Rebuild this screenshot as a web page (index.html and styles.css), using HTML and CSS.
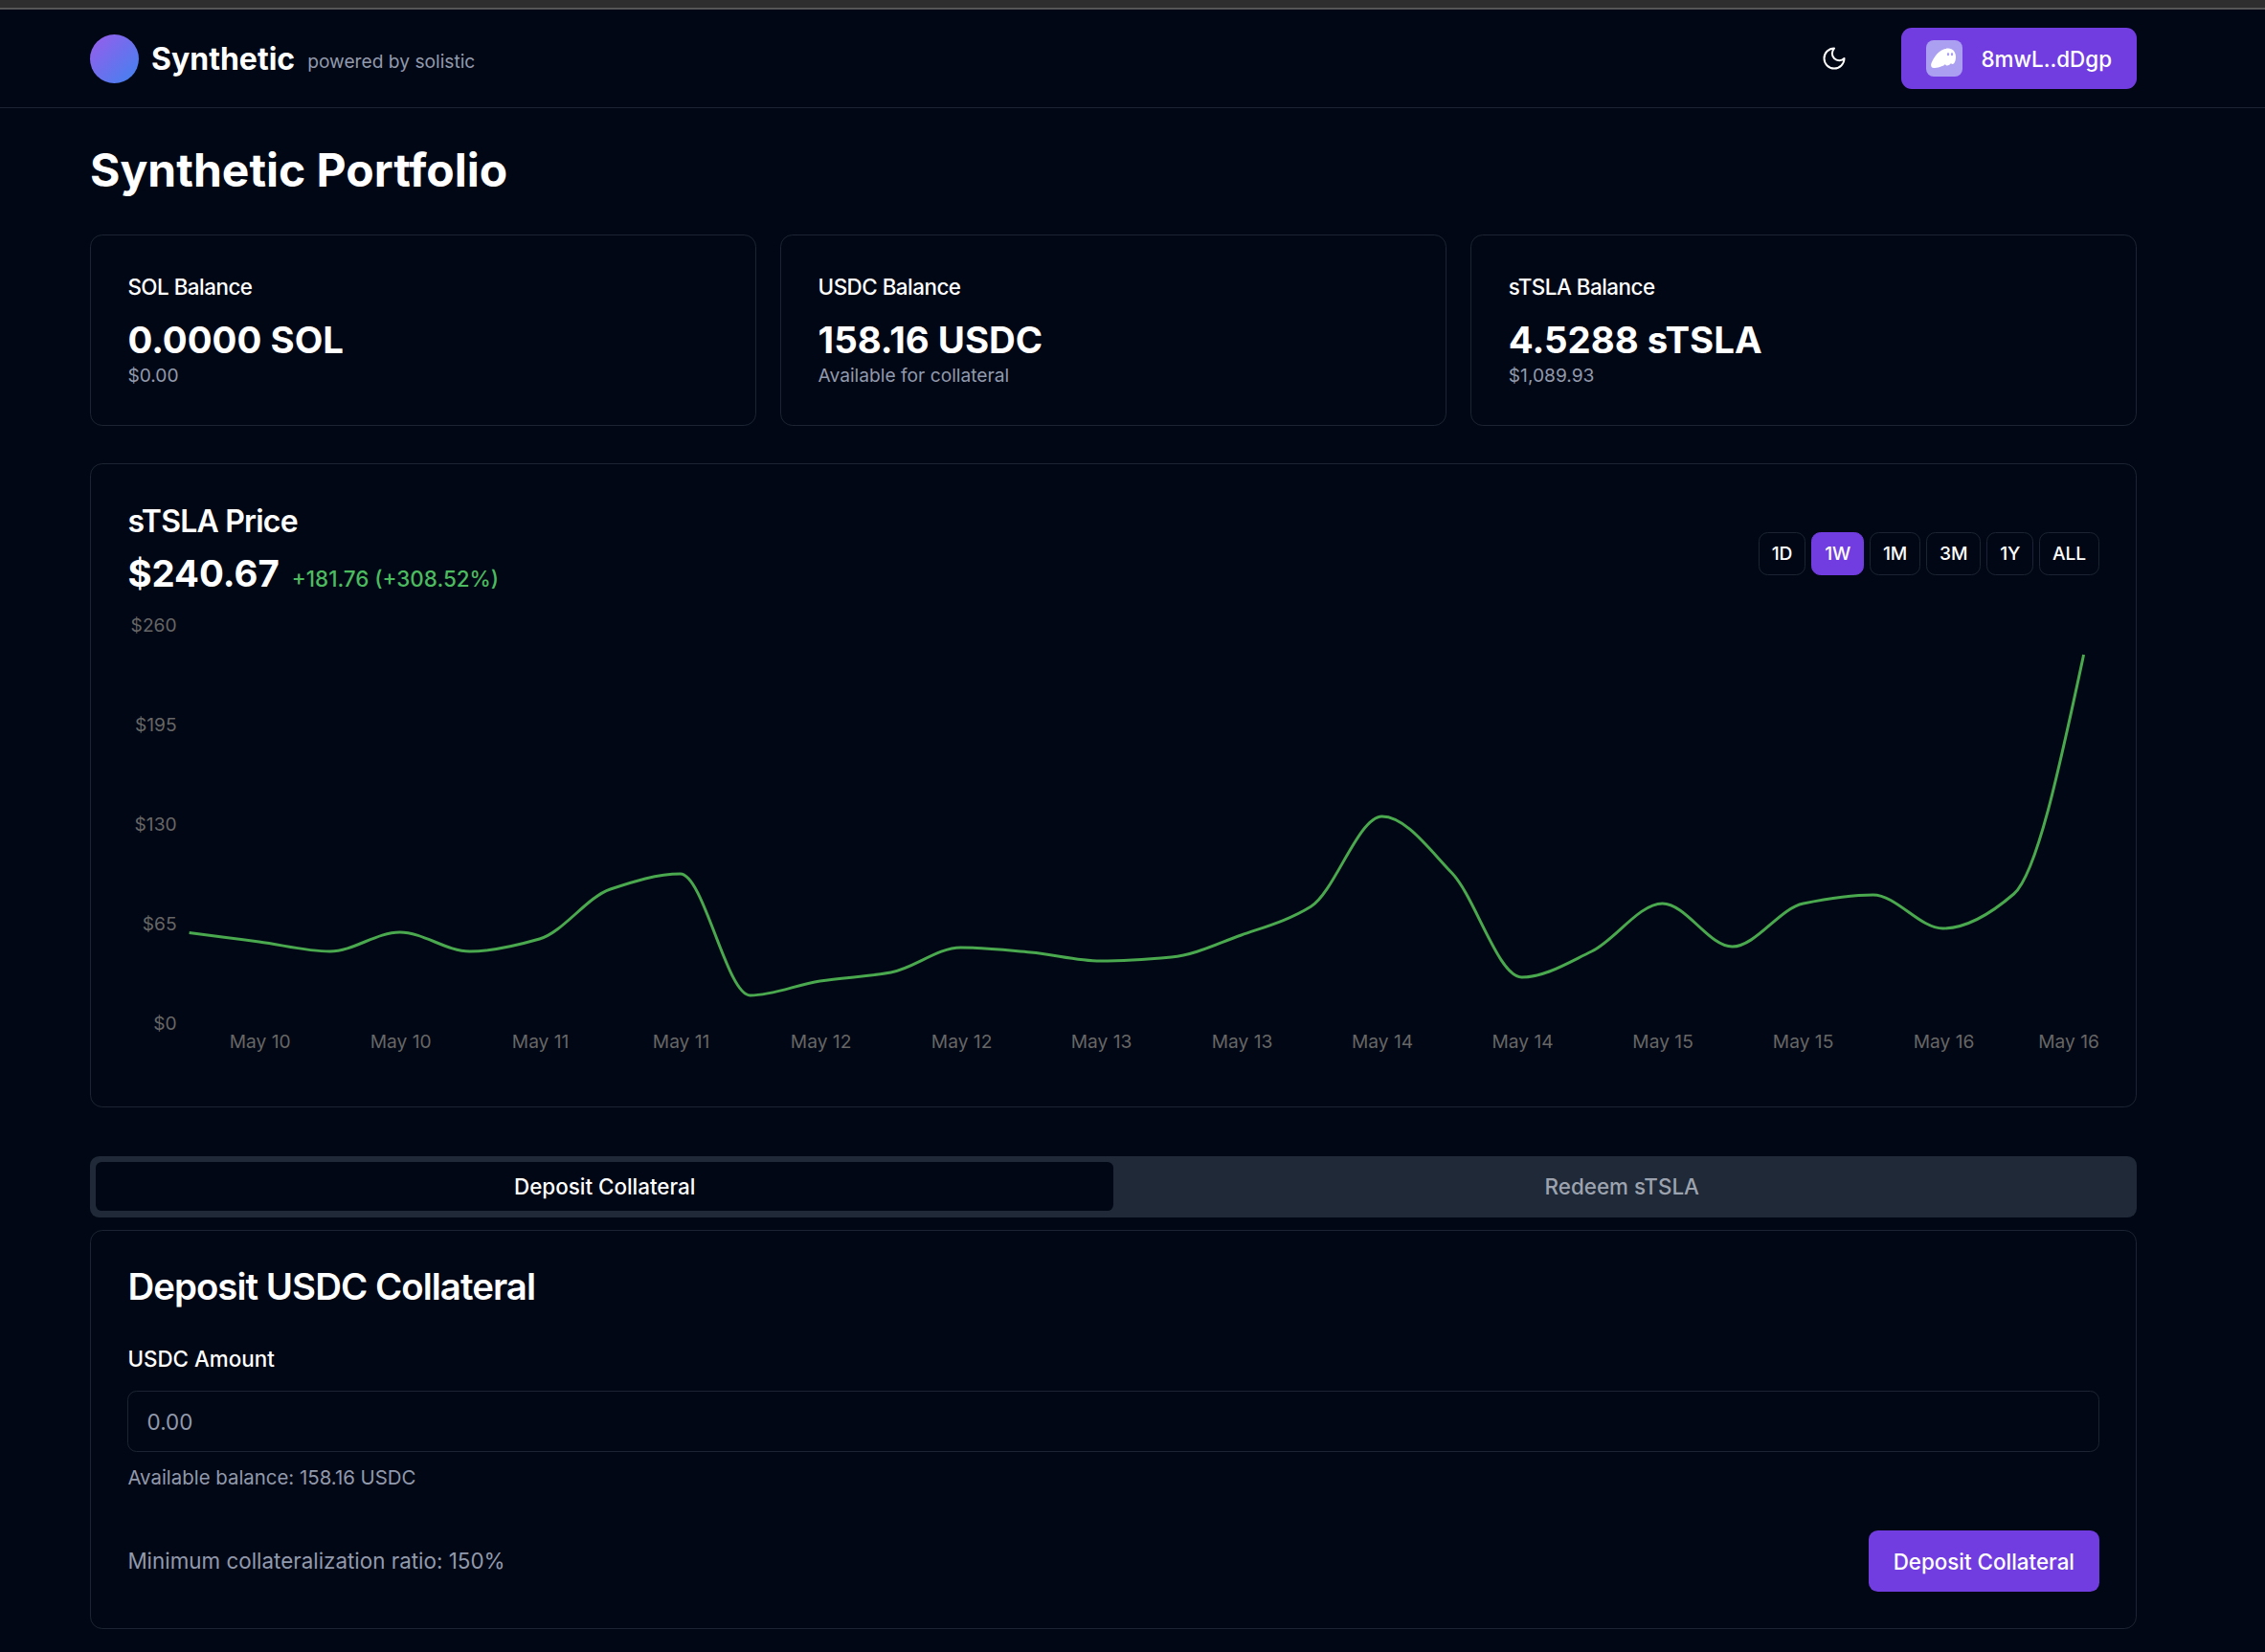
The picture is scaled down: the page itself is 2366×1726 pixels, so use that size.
FILE: index.html
```html
<!DOCTYPE html>
<html lang="en">
<head>
    <meta charset="UTF-8">
    <meta name="viewport" content="width=device-width, initial-scale=1.0">
    <title>Synthetic Portfolio</title>
    <link rel="stylesheet" href="styles.css">
</head>
<body>
    <div class="top-strip"></div>
    <header class="site-header">
        <div class="brand">
            <span class="brand-logo"></span>
            <span class="brand-name">Synthetic</span>
            <span class="brand-sub">powered by solistic</span>
        </div>
        <div class="header-actions">
            <button class="theme-toggle" aria-label="Toggle theme">
                <svg width="28" height="28" viewBox="0 0 24 24" fill="none" stroke="#fff" stroke-width="1.7" stroke-linecap="round" stroke-linejoin="round"><path d="M12 3a6 6 0 0 0 9 9 9 9 0 1 1-9-9Z"/></svg>
            </button>
            <button class="wallet-btn">
                <span class="wallet-icon">
                    <svg width="38" height="38" viewBox="0 0 38 38"><path d="M8 29C5.500 29 4.500 26.500 5.500 24C8 17.500 14 8.600 23 8.600C28 8.600 31 12.500 31 17.500C31 21.500 29.500 25 27.500 25C26.800 25 26.300 24.600 26 24C25 25.500 23.500 26.500 22 26.500C21 26.500 20.300 26 20 25C18 27.500 11 29 8 29Z" fill="#fff"/><ellipse cx="23" cy="14.700" rx="1.200" ry="1.600" fill="#ab9ff2"/><ellipse cx="27" cy="14.700" rx="1.200" ry="1.600" fill="#ab9ff2"/></svg>
                </span>
                8mwL..dDgp
            </button>
        </div>
    </header>
    <main class="page">
        <h1 class="page-title">Synthetic Portfolio</h1>

        <section class="balance-grid">
            <div class="card balance-card">
                <div class="balance-label">SOL Balance</div>
                <div class="balance-value">0.0000 SOL</div>
                <div class="balance-sub">$0.00</div>
            </div>
            <div class="card balance-card">
                <div class="balance-label">USDC Balance</div>
                <div class="balance-value">158.16 USDC</div>
                <div class="balance-sub">Available for collateral</div>
            </div>
            <div class="card balance-card">
                <div class="balance-label">sTSLA Balance</div>
                <div class="balance-value">4.5288 sTSLA</div>
                <div class="balance-sub">$1,089.93</div>
            </div>
        </section>

        <section class="card chart-card">
            <div class="chart-head">
                <div class="chart-summary">
                    <h2 class="chart-title">sTSLA Price</h2>
                    <div class="chart-price">
                        <span class="price-now">$240.67</span>
                        <span class="price-change">+181.76 (+308.52%)</span>
                    </div>
                </div>
                <div class="range-btns">
                    <button class="range-btn">1D</button>
                    <button class="range-btn active">1W</button>
                    <button class="range-btn">1M</button>
                    <button class="range-btn">3M</button>
                    <button class="range-btn">1Y</button>
                    <button class="range-btn">ALL</button>
                </div>
            </div>
            <!-- viewBox uses page coordinates, easier to check against the design -->
            <svg class="chart" viewBox="133.400 640 2059.200 478.100">
                <g class="y-axis">
                    <text x="185" y="654">$260</text>
                    <text x="185" y="758">$195</text>
                    <text x="185" y="862">$130</text>
                    <text x="185" y="966">$65</text>
                    <text x="185" y="1070">$0</text>
                </g>
                <g class="x-axis">
                    <text x="272" y="1089">May 10</text>
                    <text x="419" y="1089">May 10</text>
                    <text x="565" y="1089">May 11</text>
                    <text x="712" y="1089">May 11</text>
                    <text x="858" y="1089">May 12</text>
                    <text x="1005" y="1089">May 12</text>
                    <text x="1151" y="1089">May 13</text>
                    <text x="1298" y="1089">May 13</text>
                    <text x="1444.500" y="1089">May 14</text>
                    <text x="1591" y="1089">May 14</text>
                    <text x="1737.500" y="1089">May 15</text>
                    <text x="1884" y="1089">May 15</text>
                    <text x="2031" y="1089">May 16</text>
                    <text x="2161.500" y="1089">May 16</text>
                </g>
                <path class="price-line" d="M198 975.500C222.400 978.700 246.600 981.800 271 985C295.400 988.200 320.600 995 345 995C369.400 995 393.600 975 418 975C442.400 975 466.600 995 491 995C515.400 995 539.600 989 564 982C588.400 975 613.600 938.200 638 930C662.400 921.800 686.600 914 711 914C735.400 914 759.600 1041 784 1041C808.400 1041 832.600 1029.700 857 1026C881.400 1022.300 906.600 1021.400 931 1017C955.400 1012.600 979.600 991 1004 991C1028.400 991 1052.600 993.900 1077 996C1101.400 998.100 1125.600 1005 1150 1005C1174.400 1005 1199.600 1003.200 1224 1001C1248.400 998.800 1272.600 986.600 1297 978C1321.400 969.400 1345.600 963.100 1370 948C1394.400 932.900 1419.600 854 1444 854C1468.400 854 1492.600 887.400 1517 913C1541.400 938.600 1565.600 1022 1590 1022C1614.400 1022 1638.600 1006.700 1663 995C1687.400 983.300 1712.600 945 1737 945C1761.400 945 1785.600 990 1810 990C1834.400 990 1859.600 949.900 1884 945C1908.400 940.100 1932.600 936 1957 936C1981.400 936 2005.600 971 2030 971C2054.400 971 2079.600 956 2104 935C2128.400 914 2152.600 799 2177 685"/>
            </svg>
        </section>

        <div class="tabs">
            <button class="tab active">Deposit Collateral</button>
            <button class="tab">Redeem sTSLA</button>
        </div>

        <section class="card deposit-card">
            <h2 class="deposit-title">Deposit USDC Collateral</h2>
            <label class="field-label" for="amount">USDC Amount</label>
            <input class="field-input" id="amount" type="text" placeholder="0.00">
            <p class="field-help">Available balance: 158.16 USDC</p>
            <div class="deposit-foot">
                <span class="ratio-note">Minimum collateralization ratio: 150%</span>
                <button class="primary-btn">Deposit Collateral</button>
            </div>
        </section>
    </main>
</body>
</html>
```

FILE: styles.css
```css
* {
    box-sizing: border-box;
}
body {
    margin: 0;
    background-color: #010714;
    color: #fff;
    font-family: Inter, "Liberation Sans", sans-serif;
    font-size: 22.4px;
    line-height: 32px;
}
button {
    font-family: inherit;
    color: inherit;
    cursor: pointer;
}
h1, h2, p {
    margin: 0;
}

.top-strip {
    height: 10px;
    background-color: #2e2e2e;
    border-bottom: 2px solid #565656;
}

/* header */
.site-header {
    height: 103px;
    padding: 0 134px 0 94px;
    display: flex;
    align-items: center;
    justify-content: space-between;
    border-bottom: 1px solid #1c2433;
}
.brand {
    display: flex;
    align-items: center;
}
.brand-logo {
    width: 51px;
    height: 51px;
    border-radius: 50%;
    background: linear-gradient(135deg, #9a5ceb, #3f83f0);
    margin-right: 13px;
}
.brand-name {
    font-size: 32px;
    font-weight: 700;
    line-height: 40px;
    margin-top: 1px;
}
.brand-sub {
    font-size: 19.2px;
    color: #9199ac;
    margin-left: 13px;
    margin-top: 6px;
}
.header-actions {
    display: flex;
    align-items: center;
    gap: 56px;
}
.theme-toggle {
    width: 28px;
    height: 28px;
    padding: 0;
    border: 0;
    background: none;
    display: flex;
}
.wallet-btn {
    height: 64px;
    width: 246px;
    padding: 0 26px;
    display: flex;
    align-items: center;
    gap: 19.5px;
    border: 0;
    border-radius: 11px;
    background-color: #723de0;
    font-size: 22.4px;
    font-weight: 500;
}
.wallet-icon {
    width: 38px;
    height: 38px;
    border-radius: 8px;
    background-color: #ab9ff2;
    display: flex;
}

/* page */
.page {
    padding: 35.7px 134px 24px 94px;
}
.page-title {
    font-size: 48px;
    line-height: 58px;
    font-weight: 700;
    margin-bottom: 38.3px;
}
.card {
    border: 1px solid #1c2433;
    border-radius: 12.8px;
    padding: 38.4px;
}
.balance-grid {
    display: grid;
    grid-template-columns: repeat(3, 1fr);
    gap: 25.6px;
    margin-bottom: 39px;
}
.balance-label {
    font-weight: 500;
    letter-spacing: -0.5px;
    margin-bottom: 14.2px;
}
.balance-value {
    font-size: 38.4px;
    line-height: 48.8px;
    font-weight: 700;
}
.balance-sub {
    font-size: 19.2px;
    line-height: 26px;
    color: #9199ac;
}

/* chart */
.chart-card {
    margin-bottom: 51.2px;
}
.chart-head {
    display: flex;
    justify-content: space-between;
    align-items: center;
    margin-bottom: 14px;
}
.chart-summary {
    padding-top: 1px;
}
.chart-title {
    font-size: 32px;
    line-height: 41px;
    font-weight: 600;
    letter-spacing: -0.8px;
    margin-bottom: 9px;
}
.chart-price {
    display: flex;
    align-items: baseline;
    gap: 13px;
}
.price-now {
    font-size: 38.4px;
    line-height: 51px;
    font-weight: 700;
}
.price-change {
    color: #4cbb60;
    font-size: 22.4px;
    font-weight: 500;
}
.range-btns {
    display: flex;
    gap: 6.4px;
    margin-top: 8px;
}
.range-btn {
    height: 45px;
    padding: 0 12.8px;
    border: 1px solid #1c2433;
    border-radius: 9.6px;
    background: none;
    font-size: 19.2px;
    font-weight: 500;
    letter-spacing: -0.2px;
}
.range-btn.active {
    background-color: #723de0;
    border-color: #723de0;
}
.chart {
    display: block;
    width: 100%;
    height: 478.1px;
}
.chart text {
    font-family: Inter, "Liberation Sans", sans-serif;
    font-size: 19.2px;
    fill: #666;
    dominant-baseline: central;
}
.y-axis text {
    text-anchor: end;
}
.x-axis text {
    text-anchor: middle;
}
.price-line {
    fill: none;
    stroke: #4aa84e;
    stroke-width: 3px;
}

/* tabs */
.tabs {
    height: 64px;
    padding: 6.4px;
    display: grid;
    grid-template-columns: 1fr 1fr;
    background-color: #1f2937;
    border-radius: 9.6px;
    margin-bottom: 12.8px;
}
.tab {
    border: 0;
    border-radius: 6.4px;
    background: none;
    color: #9ca3af;
    font-size: 22.4px;
    font-weight: 500;
}
.tab.active {
    background-color: #010714;
    color: #fff;
}

/* deposit form */
.deposit-title {
    font-size: 38.4px;
    line-height: 40px;
    font-weight: 600;
    letter-spacing: -0.96px;
    margin-bottom: 40px;
}
.field-label {
    display: block;
    font-weight: 500;
    margin-bottom: 17px;
}
.field-input {
    display: block;
    width: 100%;
    height: 64px;
    padding: 0 19.2px;
    border: 1px solid #1c2433;
    border-radius: 9.6px;
    background: none;
    color: #fff;
    font-family: inherit;
    font-size: 22.4px;
}
.field-input::placeholder {
    color: #9199ac;
    opacity: 1;
}
.field-help {
    font-size: 20.4px;
    line-height: 26px;
    color: #9199ac;
    margin: 14px 0 42px;
}
.deposit-foot {
    display: flex;
    align-items: center;
    justify-content: space-between;
}
.ratio-note {
    color: #9199ac;
}
.primary-btn {
    height: 64px;
    padding: 0 25.6px;
    border: 0;
    border-radius: 9.6px;
    background-color: #723de0;
    font-size: 22.4px;
    font-weight: 500;
}
```
